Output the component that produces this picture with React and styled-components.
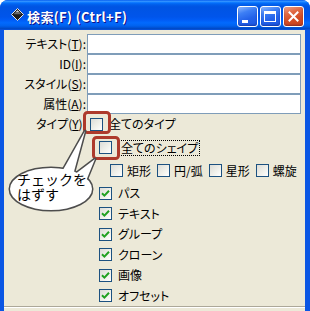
import React from "react";
import styled, { createGlobalStyle } from "styled-components";

const Global = createGlobalStyle`
  html, body { margin: 0; padding: 0; background: #ffffff; }
  body { font-family: "Noto Sans CJK JP", "Noto Sans", sans-serif; }
`;

const Window = styled.div`
  position: relative;
  width: 310px;
  height: 311px;
  overflow: hidden;
  background: #0a56e4;
  border-radius: 8px 8px 0 0;
  display: flex;
  flex-direction: column;
`;

const TitleBar = styled.div`
  height: 30px;
  box-sizing: border-box;
  display: flex;
  align-items: flex-start;
  padding: 6px 6px 0 0;
  background: linear-gradient(
    to bottom,
    #0058ee 0%,
    #3593ff 4%,
    #288eff 6%,
    #127dff 8%,
    #036ffc 10%,
    #0262ee 14%,
    #0057e5 20%,
    #0054e3 24%,
    #0055eb 56%,
    #005bf5 66%,
    #026afe 76%,
    #0062ef 86%,
    #0052d6 92%,
    #0048c4 96%,
    #0a56e4 100%
  );
`;

const IconSlot = styled.div`
  width: 27px;
  height: 21px;
  flex: none;
  display: flex;
  justify-content: flex-end;
  align-items: flex-start;
  padding-right: 3px;
  box-sizing: border-box;
`;

const AppIcon = styled.svg`
  width: 13px;
  height: 13px;
  margin-top: 2px;
  display: block;
`;

const Title = styled.div`
  flex: 1;
  color: #ffffff;
  font-weight: 700;
  font-size: 13px;
  letter-spacing: 0.4px;
  line-height: 21px;
  white-space: nowrap;
  text-shadow: 1px 1px 0 #0f1089;
  font-family: "Noto Sans CJK JP", "Liberation Sans", sans-serif;
`;

const Buttons = styled.div`
  display: flex;
  gap: 2px;
  flex: none;
`;

const CapButton = styled.div`
  position: relative;
  width: 21px;
  height: 21px;
  box-sizing: border-box;
  border: 1px solid #ffffff;
  border-radius: 3px;
  background: ${(p) =>
    p.$close
      ? "linear-gradient(160deg, #f0a38c 0%, #e06a45 30%, #d44d25 60%, #c8401c 100%)"
      : "linear-gradient(160deg, #8cb7ff 0%, #3d7ff5 30%, #2463ea 60%, #1c55e0 100%)"};
  box-shadow: inset 0 -1px 2px rgba(0, 0, 60, 0.35);
`;

const MinGlyph = styled.div`
  position: absolute;
  left: 4px;
  top: 13px;
  width: 6px;
  height: 3px;
  background: #ffffff;
`;

const MaxGlyph = styled.div`
  position: absolute;
  left: 3px;
  top: 4px;
  width: 10px;
  height: 7px;
  border: 1px solid #ffffff;
  border-top-width: 3px;
`;

const CloseGlyph = styled.svg`
  position: absolute;
  left: 4px;
  top: 4px;
  width: 11px;
  height: 11px;
`;

const Body = styled.div`
  flex: 1;
  margin: 0 5px 0 4px;
  background: #ece9d8;
  display: flex;
  flex-direction: column;
  overflow: hidden;
  font-size: 12px;
  color: #000000;
  font-feature-settings: "palt";
`;

const Form = styled.div`
  display: grid;
  grid-template-columns: 82px 1fr;
  column-gap: 1px;
  padding: 4px 4px 0 0;
`;

const FieldLabel = styled.div`
  text-align: right;
  white-space: nowrap;
  line-height: ${(p) => p.$h || 20}px;
  height: ${(p) => p.$h || 20}px;
`;

const TextInput = styled.div`
  height: 20px;
  box-sizing: border-box;
  border: 1px solid #7f9db9;
  background: #ffffff;
`;

const Row = styled.div`
  display: flex;
  align-items: center;
  height: ${(p) => p.$h || 21}px;
  margin-top: ${(p) => p.$mt || 0}px;
  padding-left: ${(p) => p.$indent || 0}px;
  white-space: nowrap;
`;

const Box = styled.div`
  width: 13px;
  height: 13px;
  box-sizing: border-box;
  flex: none;
  border: 1px solid #1c5180;
  background: linear-gradient(135deg, #dcdcd7 0%, #f0f0ea 55%, #ffffff 100%);
  margin-left: ${(p) => p.$ml || 0}px;
  display: flex;
  align-items: center;
  justify-content: center;
`;

const BoxLabel = styled.span`
  margin-left: ${(p) => p.$ml ?? 6}px;
  margin-right: ${(p) => p.$mr || 0}px;
  line-height: 16px;
`;

const FocusLabel = styled.span`
  margin-left: 7px;
  padding: 0 2px;
  height: 16px;
  line-height: 16px;
  outline: 1px dotted #000000;
  outline-offset: -1px;
`;

const OptionArea = styled.div`
  padding-left: 95px;
  display: flex;
  flex-direction: column;
`;

const CheckedList = styled.div`
  margin-top: 2px;
  height: 123px;
  overflow: hidden;
  display: flex;
  flex-direction: column;
`;

const Separator = styled.div`
  border-top: 1px solid #aca899;
  border-bottom: 1px solid #ffffff;
`;

const Overlay = styled.svg`
  position: absolute;
  left: 0;
  top: 0;
  width: 310px;
  height: 311px;
  pointer-events: none;
`;

const BubbleText = styled.div`
  position: absolute;
  left: 17px;
  top: 172px;
  font-family: "Noto Sans CJK JP", sans-serif;
  font-size: 14px;
  line-height: 15px;
  color: #000000;
  pointer-events: none;
  white-space: nowrap;
`;

const Check = () => (
  <svg width="9" height="9" viewBox="0 0 9 9">
    <path d="M1 4.2 L3.4 6.6 L8 1.8" fill="none" stroke="#21a121" strokeWidth="2" />
  </svg>
);

const CheckBox = ({ checked, ml }) => <Box $ml={ml}>{checked ? <Check /> : null}</Box>;

const Acc = ({ children }) => <u>{children}</u>;

const fields = [
  ["テキスト(", "T", "):"],
  ["ID(", "I", "):"],
  ["スタイル(", "S", "):"],
  ["属性(", "A", "):"],
];

const shapes = ["矩形", "円/弧", "星形", "螺旋"];

const kinds = ["パス", "テキスト", "グループ", "クローン", "画像", "オフセット"];

export default function App() {
  return (
    <>
      <Global />
      <Window>
        <TitleBar>
          <IconSlot>
            <AppIcon viewBox="0 0 13 13">
              <path d="M6.5 0.5 L12.5 6.5 L6.5 12.5 L0.5 6.5 Z" fill="#1b1b1b" stroke="#e8e8e8" strokeWidth="1" />
              <path d="M6.5 2.2 L10.6 6.3 L2.4 6.3 Z" fill="#6a6a6a" />
              <path d="M6.5 2.2 L8.2 3.9 L4.8 3.9 Z" fill="#d0d0d0" />
            </AppIcon>
          </IconSlot>
          <Title>検索(F) (Ctrl+F)</Title>
          <Buttons>
            <CapButton>
              <MinGlyph />
            </CapButton>
            <CapButton>
              <MaxGlyph />
            </CapButton>
            <CapButton $close>
              <CloseGlyph viewBox="0 0 11 11">
                <path d="M1.5 1.5 L9.5 9.5 M9.5 1.5 L1.5 9.5" stroke="#ffffff" strokeWidth="2" strokeLinecap="square" />
              </CloseGlyph>
            </CapButton>
          </Buttons>
        </TitleBar>
        <Body>
          <Form>
            {fields.map(([a, k, b]) => (
              <React.Fragment key={k}>
                <FieldLabel>
                  {a}
                  <Acc>{k}</Acc>
                  {b}
                </FieldLabel>
                <TextInput />
              </React.Fragment>
            ))}
            <FieldLabel $h={20}>
              タイプ(<Acc>Y</Acc>):
            </FieldLabel>
            <Row $h={20}>
              <CheckBox ml={3} />
              <BoxLabel $ml={6}>全てのタイプ</BoxLabel>
            </Row>
          </Form>
          <OptionArea>
            <Row $mt={3}>
              <CheckBox />
              <FocusLabel>全てのシェイプ</FocusLabel>
            </Row>
            <Row $mt={2} $indent={11}>
              {shapes.map((s) => (
                <React.Fragment key={s}>
                  <CheckBox />
                  <BoxLabel $ml={4} $mr={6}>
                    {s}
                  </BoxLabel>
                </React.Fragment>
              ))}
            </Row>
            <CheckedList>
              {kinds.map((k) => (
                <Row key={k}>
                  <CheckBox checked />
                  <BoxLabel $ml={6}>{k}</BoxLabel>
                </Row>
              ))}
            </CheckedList>
          </OptionArea>
          <Separator />
        </Body>
        <Overlay viewBox="0 0 310 311">
          <rect x="84.5" y="112.5" width="25" height="20" rx="3" fill="none" stroke="#ad3a2c" strokeWidth="3" />
          <rect x="93.5" y="137.5" width="25" height="21" rx="3" fill="none" stroke="#ad3a2c" strokeWidth="3" />
          <g stroke="#4d4d4d" strokeWidth="3" strokeLinejoin="round" fill="#ffffff">
            <ellipse cx="51" cy="189" rx="41" ry="21" />
            <path d="M59 177 L85 131 L72 179 Z" />
            <path d="M70 178 L95 159 L86 181 Z" />
          </g>
          <g fill="#ffffff">
            <ellipse cx="51" cy="189" rx="41" ry="21" />
            <path d="M59 177 L85 131 L72 179 Z" />
            <path d="M70 178 L95 159 L86 181 Z" />
          </g>
        </Overlay>
        <BubbleText>
          チェックを
          <br />
          はずす
        </BubbleText>
      </Window>
    </>
  );
}
